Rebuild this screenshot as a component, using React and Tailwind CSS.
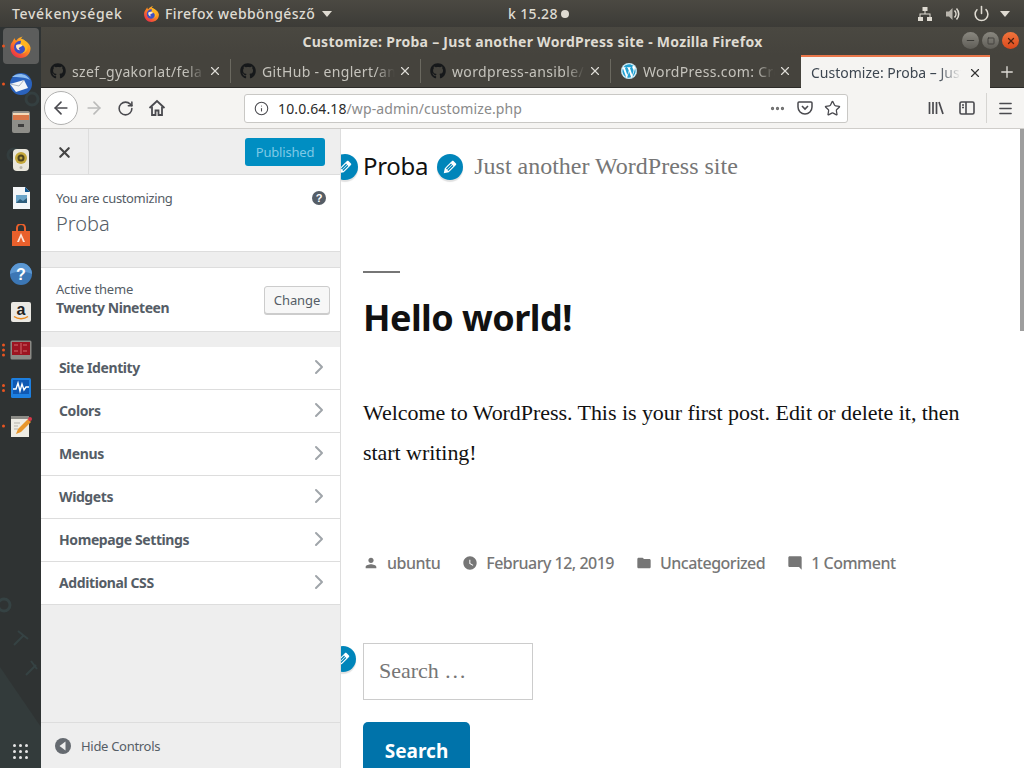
import React from "react";
import { FaGithub, FaWordpress } from "react-icons/fa";
import { X, Plus, ArrowLeft, ArrowRight, RotateCw, Info, Star, Menu, ChevronRight, Power, Ellipsis, Minus, Square } from "lucide-react";

const ui = "font-['Noto_Sans','Liberation_Sans',sans-serif]";

function Firefox({ size = 24, id = "a" }) {
  return (
    <svg width={size} height={size} viewBox="0 0 32 32">
      <defs>
        <linearGradient id={"ff" + id} x1="0.9" y1="0" x2="0.1" y2="1">
          <stop offset="0" stopColor="#ffd02e" />
          <stop offset="0.45" stopColor="#ff8a1f" />
          <stop offset="1" stopColor="#e6204f" />
        </linearGradient>
      </defs>
      <path d="M5 9c1-2 2-4 3-5 0 2 1 3 2 4 2-3 5-5 9-6-2 2-3 4-2 5 6 0 12 5 13 11 0 8-6 14-14 14S2 26 2 17c0-3 1-6 3-8z" fill={"url(#ff" + id + ")"} />
      <circle cx="16" cy="17" r="9" fill="#3d4fc4" />
      <path d="M16 5c6 1 11 6 10 13-1 5-5 8-10 8 4-1 7-4 6-8-1-3-4-5-7-4 2-3 2-6 1-9z" fill="#ffb521" />
      <path d="M10 14c3-2 8-1 9 1l-4 2c-2 1-2 3 1 4-4 1-7-3-6-7z" fill="#ffe9c4" />
    </svg>
  );
}

function Tab({ icon, label }) {
  return (
    <div className="flex items-center w-[190px] h-full px-[9px] relative">
      <span className="w-[16px] flex justify-center text-[#16181a] shrink-0">{icon}</span>
      <span className="ml-[6px] pt-[1px] w-[133px] overflow-hidden whitespace-nowrap text-[14px] text-[#c5c3bc] tracking-[0.35px] [mask-image:linear-gradient(to_right,black_85%,transparent)]">{label}</span>
      <X size={14} strokeWidth={2} className="ml-auto text-[#dedcd6] shrink-0" />
      <span className="absolute right-0 top-[2px] bottom-[2px] w-px bg-[#6b6960]" />
    </div>
  );
}

function Dock() {
  const Dots = ({ n }) => (
    <div className="absolute left-[2px] top-1/2 -translate-y-1/2 flex flex-col gap-[2px]">
      {Array.from({ length: n }).map((_, i) => (
        <span key={i} className="w-[3px] h-[3px] rounded-full bg-[#e95420]" />
      ))}
    </div>
  );
  const Slot = ({ dots = 0, active, children }) => (
    <div className="relative z-10 h-[38px] flex items-center justify-center">
      {dots > 0 && <Dots n={dots} />}
      <div className={"w-[36px] h-[36px] flex items-center justify-center rounded-[4px] " + (active ? "bg-[#5c5d5c]" : "")}>{children}</div>
    </div>
  );
  return (
    <aside className="w-[41px] shrink-0 h-full bg-[#2f3333] flex flex-col relative overflow-hidden">
      <svg className="absolute inset-0" width="41" height="741" viewBox="0 0 41 741" fill="none">
        <path d="M0 640L41 700V741H0z" fill="#333b3b" />
        <circle cx="32" cy="72" r="6" stroke="#343f40" strokeWidth="3" />
        <circle cx="14" cy="128" r="6" stroke="#333d3e" strokeWidth="3" />
        <circle cx="4" cy="578" r="6" stroke="#354243" strokeWidth="3" />
        <path d="M14 618l10-10M18 604l10 8M26 648l10-10M31 634l6 8" stroke="#354243" strokeWidth="2" />
      </svg>
      <Slot dots={1} active><Firefox size={23} id="dock" /></Slot>
      <Slot dots={1}>
        <svg width="24" height="24" viewBox="0 0 24 24">
          <circle cx="12" cy="12" r="11" fill="#2a62bd" />
          <path d="M3 5c5-5 15-4 18 3-5-3-12-3-18-3z" fill="#8cbcf0" />
          <path d="M1 12l14-4 4 8-12 4z" fill="#f2f5f8" />
          <path d="M1 12l9 2 5-6" fill="none" stroke="#a9b4c0" />
        </svg>
      </Slot>
      <Slot>
        <svg width="24" height="24" viewBox="0 0 24 24">
          <rect x="3" y="1" width="18" height="22" rx="2" fill="#8e8e89" />
          <rect x="4" y="3" width="16" height="7" fill="#d9784a" />
          <rect x="4" y="3" width="16" height="2" fill="#f5d9b8" />
          <rect x="9" y="14" width="6" height="3" fill="#3d3d3d" />
        </svg>
      </Slot>
      <Slot>
        <svg width="24" height="24" viewBox="0 0 24 24">
          <rect x="4" y="1" width="16" height="22" rx="4" fill="#e9e7dc" />
          <circle cx="12" cy="10" r="6" fill="#c4a83a" />
          <circle cx="12" cy="10" r="3.5" fill="#4d4420" />
          <circle cx="12" cy="10" r="1.5" fill="#bda33a" />
          <circle cx="12" cy="19.5" r="1.5" fill="#b9b7ab" />
        </svg>
      </Slot>
      <Slot>
        <svg width="24" height="24" viewBox="0 0 24 24">
          <path d="M4 1h12l5 5v17H4z" fill="#f3f6f8" />
          <path d="M16 1l5 5h-5z" fill="#10568f" />
          <rect x="7" y="9" width="11" height="8" fill="#6aa4c8" />
          <path d="M7 17l4-4 3 2 4-3v5z" fill="#2f5e7c" />
        </svg>
      </Slot>
      <Slot>
        <svg width="24" height="24" viewBox="0 0 24 24">
          <path d="M3 7h18v15H3z" fill="#e9602c" />
          <path d="M8 7V4a4 4 0 018 0v3" fill="none" stroke="#e9602c" strokeWidth="2" />
          <path d="M12 9l4 9h-2l-2-5-2 5H8z" fill="#fbe3d8" />
        </svg>
      </Slot>
      <Slot>
        <svg width="24" height="24" viewBox="0 0 24 24">
          <circle cx="12" cy="12" r="11" fill="#3c77b5" />
          <path d="M1 12a11 11 0 0122 0c-6-3-16-3-22 0z" fill="#5b97d2" />
          <text x="12" y="18" textAnchor="middle" fontSize="16" fontWeight="700" fill="#fff" fontFamily="Liberation Sans">?</text>
        </svg>
      </Slot>
      <Slot>
        <svg width="22" height="22" viewBox="0 0 22 22">
          <rect width="20" height="20" x="1" y="1" rx="2" fill="#ebe9e3" />
          <text x="11" y="14" textAnchor="middle" fontSize="16" fontWeight="700" fill="#222" fontFamily="Liberation Sans">a</text>
          <path d="M4 15.5c4 3 10 3 14 0" fill="none" stroke="#e98a1e" strokeWidth="1.4" />
        </svg>
      </Slot>
      <Slot dots={3}>
        <svg width="22" height="20" viewBox="0 0 22 20">
          <rect width="21" height="19" x="0.5" y="0.5" rx="1.5" fill="#8a8a85" />
          <rect x="2" y="2" width="18" height="13" fill="#9c1420" />
          <path d="M4 5h4M13 5h4M4 11h4M13 11h4M11 3v11" stroke="#e08080" strokeWidth="0.8" />
        </svg>
      </Slot>
      <Slot dots={2}>
        <svg width="22" height="22" viewBox="0 0 22 22">
          <rect width="20" height="20" x="1" y="1" rx="1.5" fill="#1d7fe0" />
          <rect x="3" y="3" width="16" height="14" fill="#0f58b3" />
          <path d="M3 12h3l2-6 2 8 2-7 2 6 2-3h3" fill="none" stroke="#fff" strokeWidth="1.4" />
        </svg>
      </Slot>
      <Slot dots={1}>
        <svg width="24" height="24" viewBox="0 0 24 24">
          <rect x="2" y="3" width="18" height="20" fill="#eeece4" />
          <rect x="2" y="2" width="18" height="3" fill="#8b8b86" />
          <path d="M5 9h6M5 12h4M5 15h4" stroke="#b5b3aa" />
          <path d="M7 20l2-5L19 5l3 3L12 18z" fill="#e8962a" />
          <circle cx="21" cy="5" r="2" fill="#d8394a" />
        </svg>
      </Slot>
      <div className="relative mt-auto mb-[9px] mx-auto grid grid-cols-3 gap-[3px]">
        {Array.from({ length: 9 }).map((_, i) => (
          <span key={i} className="w-[3px] h-[3px] rounded-full bg-[#e6e6e6]" />
        ))}
      </div>
    </aside>
  );
}

function Row({ label }) {
  return (
    <div className="h-[43px] bg-white border-b border-[#dddddd] flex items-center pl-[18px] pr-[9px] pb-[2px] justify-between">
      <span className="text-[14px] font-bold text-[#555d66] tracking-[-0.4px]">{label}</span>
      <ChevronRight size={24} strokeWidth={2} className="text-[#a0a5aa]" />
    </div>
  );
}

function Sidebar() {
  return (
    <div className="w-[300px] shrink-0 h-full bg-[#eeeeee] border-r border-[#dddddd] flex flex-col text-[#555d66]">
      <div className="h-[46px] shrink-0 flex items-start border-b border-[#dddddd] pr-[15px]">
        <div className="w-[48px] h-full border-r border-[#dddddd] flex items-center justify-center pt-[1px]">
          <X size={17} strokeWidth={3} className="text-[#444]" />
        </div>
        <div className="ml-auto mt-[9px] w-[80px] h-[28px] pt-[2px] rounded-[3px] bg-[#008ec2] text-[#7ec9e6] text-[13px] tracking-[-0.2px] flex items-center justify-center">Published</div>
      </div>
      <div className="h-[77px] shrink-0 bg-white border-b border-[#dddddd] pl-[15px] pr-[13px] pt-[14px] flex justify-between">
        <div>
          <div className="text-[13px] leading-[18px] tracking-[-0.35px]">You are customizing</div>
          <div className="text-[20px] leading-[28px] mt-[3px] font-light text-[#555d66]">Proba</div>
        </div>
        <svg width="16" height="16" viewBox="0 0 16 16" className="mt-[1px]">
          <circle cx="8" cy="8" r="7" fill="#555d66" />
          <text x="8" y="12" textAnchor="middle" fontSize="11" fontWeight="700" fill="#fff" fontFamily="Liberation Sans">?</text>
        </svg>
      </div>
      <div className="h-[16px] shrink-0 border-b border-[#dddddd]" />
      <div className="h-[64px] shrink-0 bg-white border-b border-[#dddddd] pl-[15px] pr-[10px] flex items-center justify-between">
        <div className="mb-[2px]">
          <div className="text-[13px] leading-[18px] tracking-[-0.2px]">Active theme</div>
          <div className="text-[14px] leading-[20px] font-bold tracking-[-0.45px]">Twenty Nineteen</div>
        </div>
        <div className="w-[66px] h-[28px] pt-[2px] rounded-[3px] border border-[#cccccc] bg-[#f7f7f7] shadow-[0_1px_0_#cccccc] text-[13px] tracking-[-0.1px] flex items-center justify-center">Change</div>
      </div>
      <div className="h-[15px] shrink-0" />
      <Row label="Site Identity" />
      <Row label="Colors" />
      <Row label="Menus" />
      <Row label="Widgets" />
      <Row label="Homepage Settings" />
      <Row label="Additional CSS" />
      <div className="mt-auto h-[46px] shrink-0 border-t border-[#dddddd] flex items-center pl-[14px] gap-[10px]">
        <svg width="16" height="16" viewBox="0 0 16 16">
          <circle cx="8" cy="8" r="8" fill="#656a70" />
          <path d="M10.5 3.5v9L4.5 8z" fill="#eeeeee" />
        </svg>
        <span className="text-[13px] tracking-[-0.3px] pt-[2px]">Hide Controls</span>
      </div>
    </div>
  );
}

function Bubble({ className }) {
  return (
    <span className={"absolute w-[26px] h-[26px] rounded-full bg-[#0085ba] shadow-[0_2px_1px_rgba(0,0,0,0.12),0_0_0_2px_#ffffff] flex items-center justify-center " + className}>
      <svg width="18" height="18" viewBox="0 0 20 20" fill="#ffffff">
        <path d="M13.89 3.39l2.71 2.72c.46.46.42 1.24.03 1.64l-8.01 8.02-5.56 1.16 1.16-5.58s7.6-7.63 7.99-8.03c.39-.39 1.22-.39 1.68.07zm-2.73 2.79l-5.59 5.61 1.11 1.11 5.54-5.65zm-2.97 8.23l5.58-5.6-1.07-1.08-5.59 5.6z" />
      </svg>
    </span>
  );
}

function Mat({ d }) {
  return (
    <svg width="16" height="16" viewBox="0 0 24 24" fill="#767676"><path d={d} /></svg>
  );
}

function Meta({ d, label, gapClass }) {
  return (
    <span className={"flex items-center gap-[8px] " + gapClass}>
      <span className="w-[16px] flex justify-center"><Mat d={d} /></span>
      {label}
    </span>
  );
}

function Preview() {
  return (
    <div className="flex-1 h-full bg-white relative overflow-hidden pl-[22px]">
      <div className="absolute right-0 top-0 w-[4px] h-[202px] bg-[#9e9e9e]" />
      <div className="flex items-center h-[73px] relative">
        <Bubble className="left-[-31px] top-[25px]" />
        <span className="text-[24px] text-[#111111] leading-[30px] tracking-[-0.3px]">Proba</span>
        <Bubble className="left-[74px] top-[25px]" />
        <span className="ml-[46px] font-['Liberation_Serif',serif] text-[24px] leading-[30px] text-[#767676]">Just another WordPress site</span>
      </div>
      <div className="w-[37px] h-[2px] bg-[#767676] mt-[69px]" />
      <h1 className="text-[36px] leading-[44px] font-bold text-[#111111] mt-[23px] tracking-[-0.55px]">Hello world!</h1>
      <p className="font-['Liberation_Serif',serif] text-[22px] leading-[40px] text-[#111111] mt-[53px] w-[620px] tracking-[-0.05px]">
        Welcome to WordPress. This is your first post. Edit or delete it, then start writing!
      </p>
      <div className="flex items-center h-[24px] mt-[78px] text-[16px] font-medium text-[#767676] tracking-[-0.5px]">
        <Meta d="M12 12c2.21 0 4-1.79 4-4s-1.79-4-4-4-4 1.79-4 4 1.79 4 4 4zm0 2c-2.67 0-8 1.34-8 4v2h16v-2c0-2.66-5.33-4-8-4z" label="ubuntu" gapClass="mr-[22px]" />
        <Meta d="M11.99 2C6.47 2 2 6.48 2 12s4.47 10 9.99 10C17.52 22 22 17.52 22 12S17.52 2 11.99 2zM16.2 16.2L11 13V7h1.5v5.2l4.5 2.7-.8 1.3z" label="February 12, 2019" gapClass="mr-[22px]" />
        <Meta d="M10 4H4c-1.1 0-1.99.9-1.99 2L2 18c0 1.1.9 2 2 2h16c1.1 0 2-.9 2-2V8c0-1.1-.9-2-2-2h-8l-2-2z" label="Uncategorized" gapClass="mr-[22px]" />
        <Meta d="M21.99 4c0-1.1-.89-2-1.99-2H4c-1.1 0-2 .9-2 2v12c0 1.1.9 2 2 2h14l4 4-.01-18z" label="1 Comment" gapClass="" />
      </div>
      <div className="relative mt-[68px]">
        <Bubble className="left-[-33px] top-[3px]" />
        <div className="w-[170px] h-[57px] border border-[#cccccc] flex items-center pl-[15px] pb-[2px] font-['Liberation_Serif',serif] text-[22px] text-[#767676]">Search …</div>
      </div>
      <div className="mt-[22px] w-[107px] h-[60px] rounded-[5px] bg-[#0073aa] text-white text-[19px] font-bold flex items-start justify-center pt-[15px]">Search</div>
    </div>
  );
}

function Caret() {
  return <svg width="10" height="6" viewBox="0 0 10 6"><path d="M0 0h10L5 6z" fill="#dfdbd2" /></svg>;
}

export default function App() {
  return (
    <div className={"w-[1024px] h-[768px] overflow-hidden flex flex-col " + ui}>
      <header className="h-[27px] shrink-0 bg-gradient-to-b from-[#4b4942] to-[#3c3b37] flex items-center pl-[12px] pr-[14px] text-[14px] font-medium text-[#dfdbd2] relative">
        <span className="tracking-[0.7px]">Tevékenységek</span>
        <span className="absolute left-[143px] top-[5px]"><Firefox size={17} id="top" /></span>
        <span className="absolute left-[165px] top-[3px] tracking-[0.42px]">Firefox webböngésző</span>
        <span className="absolute left-[322px] top-[11px]"><Caret /></span>
        <span className="absolute left-[508px] tracking-[0.35px]">k 15.28</span>
        <span className="absolute left-[561px] w-[8px] h-[8px] rounded-full bg-[#dfdbd2]" />
        <div className="ml-auto flex items-center">
          <svg width="16" height="16" viewBox="0 0 16 16" fill="#dfdbd2" className="mr-[12px]">
            <rect x="5.5" y="1" width="5" height="4" />
            <rect x="1" y="11" width="5" height="4" />
            <rect x="10" y="11" width="5" height="4" />
            <path d="M7.5 5h1v2.5h5V11h-1V8.500h-9V11h-1V7.500h5z" />
          </svg>
          <svg width="16" height="16" viewBox="0 0 16 16" fill="#dfdbd2" className="mr-[12px]">
            <path d="M1 5.500h3L7.500 2v12L4 10.500H1z" opacity="0.75" />
            <path d="M9.500 4.500a5 5 0 010 7M11.500 2.500a8 8 0 010 11" fill="none" stroke="#dfdbd2" strokeWidth="1.600" />
          </svg>
          <Power size={17} strokeWidth={2.2} className="mr-[10px]" />
          <Caret />
        </div>
      </header>
      <div className="flex-1 flex min-h-0">
        <Dock />
        <div className="flex-1 min-w-0 flex flex-col">
          <div className="h-[28px] shrink-0 bg-gradient-to-b from-[#4a4841] to-[#45433d] flex items-center justify-center relative text-[14px] font-bold text-[#dfdbd2]">
            <span className="tracking-[0.28px]">Customize: Proba – Just another WordPress site - Mozilla Firefox</span>
            <div className="absolute right-[5px] top-[5px] flex gap-[3px]">
              <span className="w-[17px] h-[17px] rounded-full bg-gradient-to-b from-[#8a8880] to-[#5f5d57] flex items-center justify-center"><Minus size={11} strokeWidth={2.5} className="text-[#3c3b37]" /></span>
              <span className="w-[17px] h-[17px] rounded-full bg-gradient-to-b from-[#8a8880] to-[#5f5d57] flex items-center justify-center"><Square size={8} strokeWidth={2.5} className="text-[#3c3b37]" /></span>
              <span className="w-[17px] h-[17px] rounded-full bg-gradient-to-b from-[#f0743c] to-[#d9481c] flex items-center justify-center"><X size={10} strokeWidth={3} className="text-[#4b2010]" /></span>
            </div>
          </div>
          <div className="h-[33px] shrink-0 bg-[#45433d] flex items-end border-b border-[#2c2b28]">
            <div className="h-[28px] mb-[2px] flex">
              <Tab icon={<FaGithub size={16} />} label="szef_gyakorlat/fela" />
              <Tab icon={<FaGithub size={16} />} label="GitHub - englert/ansible" />
              <Tab icon={<FaGithub size={16} />} label="wordpress-ansible/" />
            </div>
            <div className="h-[28px] mb-[2px] flex items-center w-[190px] pl-[10px] pr-[9px]">
              <FaWordpress size={16} className="text-[#21a0d2] bg-white rounded-full shrink-0" />
              <span className="ml-[6px] pt-[1px] w-[132px] overflow-hidden whitespace-nowrap text-[14px] text-[#c5c3bc] tracking-[0.35px] [mask-image:linear-gradient(to_right,black_85%,transparent)]">WordPress.com: Create</span>
              <X size={14} className="ml-auto text-[#dedcd6] shrink-0" />
            </div>
            <div className="w-[189px] h-[33px] -mb-px bg-[#f5f4f2] border-t-2 border-[#e9764a] flex items-center pl-[10px] pr-[8px]">
              <span className="w-[150px] overflow-hidden whitespace-nowrap text-[14px] text-[#3d4650] [mask-image:linear-gradient(to_right,black_85%,transparent)]">Customize: Proba – Just another</span>
              <X size={14} className="ml-auto text-[#333] shrink-0" />
            </div>
            <div className="flex-1 h-[30px] flex items-center justify-center">
              <Plus size={18} strokeWidth={1.8} className="text-[#dedcd6]" />
            </div>
          </div>
          <div className="h-[41px] shrink-0 bg-[#f5f4f2] border-b border-[#cfcdca] flex items-center pl-[3px] pr-[11px] relative">
            <span className="w-[34px] h-[34px] rounded-full border border-[#b1b1b0] bg-white flex items-center justify-center text-[#4a4a4f]"><ArrowLeft size={20} strokeWidth={2} /></span>
            <ArrowRight size={20} strokeWidth={2} className="ml-[6px] text-[#bbbbba]" />
            <RotateCw size={17} strokeWidth={2.2} className="ml-[13px] text-[#4a4a4f]" />
            <svg width="18" height="18" viewBox="0 0 18 18" className="ml-[14px]" fill="none" stroke="#4a4a4f" strokeWidth="1.800">
              <path d="M1.500 9L9 2l7.500 7" />
              <path d="M4 7.500V16h3.500v-4.500h3V16H14V7.500" />
            </svg>
            <div className="ml-[78px] w-[604px] h-[29px] rounded-[3px] border border-[#c9c8c5] bg-white flex items-center pl-[9px] pr-[5px] text-[14px] tracking-[0.12px]">
              <Info size={15} strokeWidth={1.7} className="text-[#4a4a4f]" />
              <span className="ml-[9px] text-[#2b2b2b]">10.0.64.18</span>
              <span className="text-[#8a8a8a]">/wp-admin/customize.php</span>
              <Ellipsis size={17} strokeWidth={2.6} className="ml-auto text-[#6b6b6b]" />
              <svg width="16" height="16" viewBox="0 0 16 16" className="ml-[11px]"><path d="M2 2h12a1 1 0 011 1v4a7 7 0 01-14 0V3a1 1 0 011-1z" fill="none" stroke="#4a4a4f" strokeWidth="1.5" /><path d="M5 6l3 3 3-3" fill="none" stroke="#4a4a4f" strokeWidth="1.6" /></svg>
              <Star size={17} strokeWidth={1.8} className="ml-[11px] mr-[1px] text-[#4a4a4f]" />
            </div>
            <svg width="16" height="14" viewBox="0 0 16 14" className="ml-auto"><path d="M1.500 1v12M5 1v12M8.500 1v12M11 1l4 12" fill="none" stroke="#4a4a4f" strokeWidth="1.700" /></svg>
            <svg width="16" height="14" viewBox="0 0 16 14" className="ml-[15px]" fill="none" stroke="#4a4a4f" strokeWidth="1.600">
              <rect x="1" y="1" width="14" height="12" rx="1.500" />
              <path d="M7 1v12M3 4h2M3 6.500h2" />
            </svg>
            <span className="w-px h-[30px] bg-[#d6d5d2] ml-[11px]" />
            <Menu size={17} strokeWidth={1.9} className="ml-[10px] mr-[-1px] text-[#4a4a4f]" />
          </div>
          <div className="flex-1 min-h-0 flex">
            <Sidebar />
            <Preview />
          </div>
        </div>
      </div>
    </div>
  );
}
